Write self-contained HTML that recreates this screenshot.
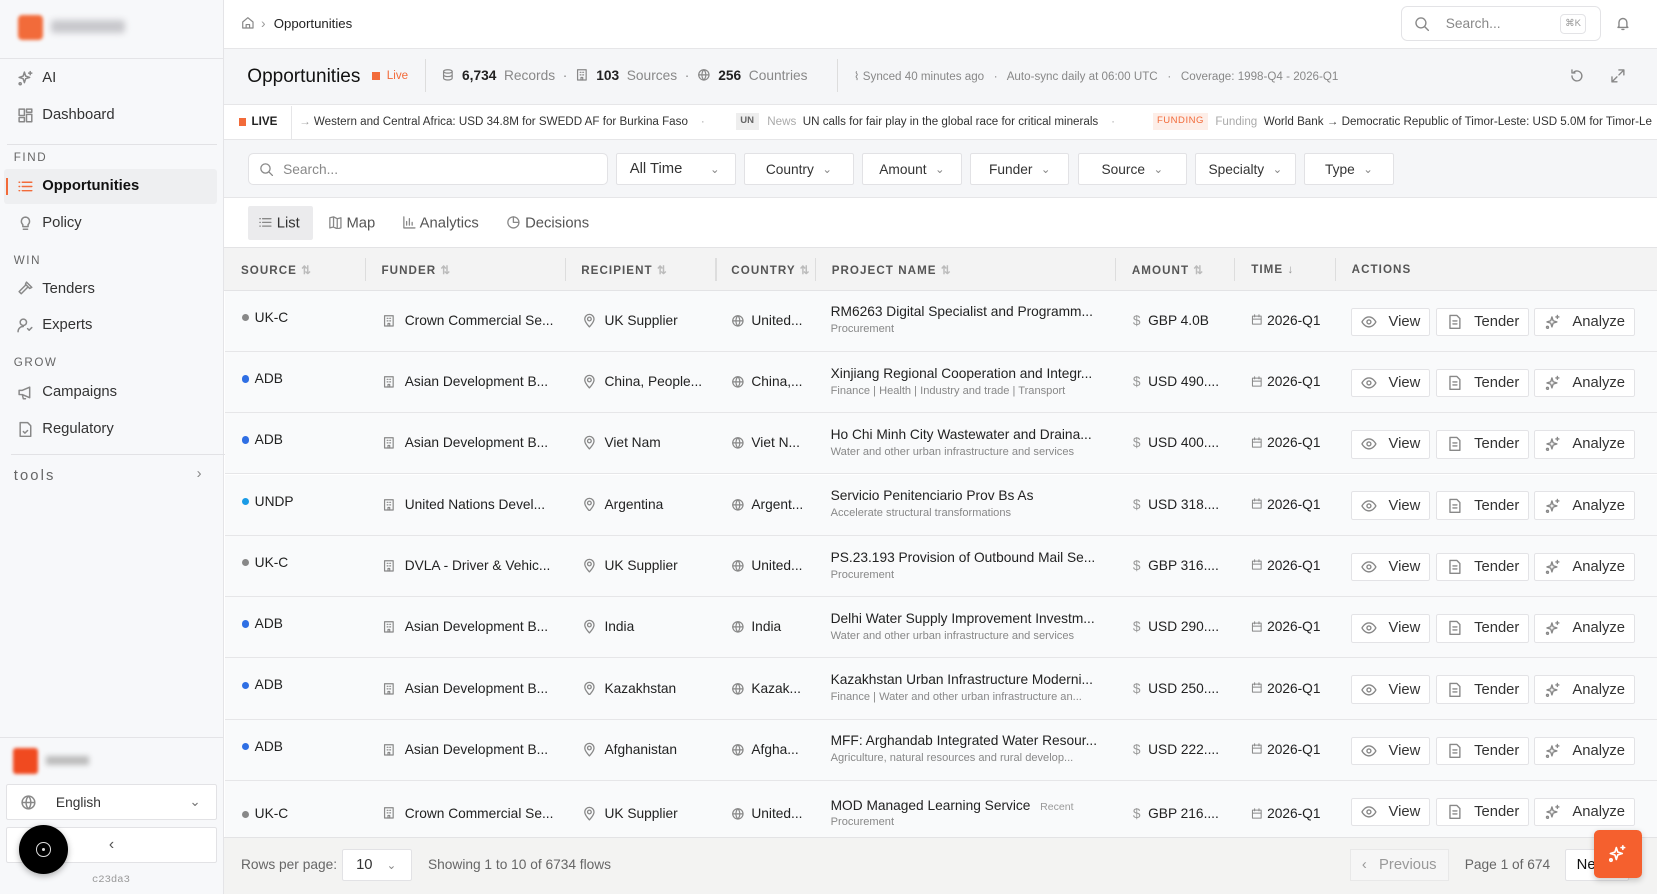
<!DOCTYPE html>
<html><head><meta charset="utf-8"><style>
*{box-sizing:border-box;margin:0;padding:0}
html,body{width:1657px;height:894px;overflow:hidden;background:#fff}
#app{zoom:1.0568;width:1568px;height:846px;position:relative;font-family:"Liberation Sans",sans-serif;color:#222;font-size:13px}
.a{position:absolute;white-space:nowrap}
svg{fill:none;stroke:#888;stroke-width:1.4;stroke-linecap:round;stroke-linejoin:round}
.side{position:absolute;left:0;top:0;width:212px;height:846px;background:#f7f8fa;border-right:1px solid #e4e4e7}
.nav{position:absolute;left:16px;font-size:14px;color:#333;display:flex;align-items:center;gap:8px}
.sec{position:absolute;left:13px;font-size:11px;letter-spacing:1.5px;color:#666}
.btn{position:absolute;background:#fff;border:1px solid #e2e2e5;border-radius:2px;display:flex;align-items:center;font-size:13px;color:#333}
.th{position:absolute;top:249px;font-size:11px;font-weight:bold;letter-spacing:1px;color:#555}
.sep{position:absolute;top:244px;width:1px;height:22px;background:#ddd}
.row{position:absolute;left:213px;width:1355px;height:58px;background:#f9fafb;border-bottom:1px solid #e6e6e8}
.row .a{font-size:13px}
.sub{font-size:10.5px!important;color:#888}
.ab{position:absolute;top:16px;height:27px;background:#fff;border:1px solid #e3e3e6;border-radius:2px;display:flex;align-items:center;font-size:14px;color:#333}
.ab span{margin-left:11px}
</style></head><body><div id="app">

<div class="side">
 <div class="a" style="left:17px;top:14px;width:24px;height:24px;background:#f26b3a;border-radius:4px;filter:blur(1.5px)"></div>
 <div class="a" style="left:48px;top:19px;width:70px;height:12px;background:#c8c8cc;border-radius:3px;filter:blur(3px)"></div>
 <div class="a" style="left:0;top:55px;width:211px;height:1px;background:#e4e4e7"></div>
 <div class="nav" style="top:66px"><svg width="16" height="16" viewBox="0 0 16 16"><path d="M7 2l1.2 3.8L12 7l-3.8 1.2L7 12l-1.2-3.8L2 7l3.8-1.2z"/><path d="M12.5 1.5v3M11 3h3"/><circle cx="3" cy="13" r="1"/></svg>AI</div>
 <div class="nav" style="top:101px"><svg width="16" height="16" viewBox="0 0 16 16"><rect x="2" y="2" width="5" height="6"/><rect x="9" y="2" width="5" height="3"/><rect x="2" y="10" width="5" height="4"/><rect x="9" y="7" width="5" height="7"/></svg>Dashboard</div>
 <div class="a" style="left:7px;top:136px;width:198px;height:1px;background:#e2e2e5"></div>
 <div class="sec" style="top:143px">FIND</div>
 <div class="a" style="left:4px;top:160px;width:201px;height:33px;background:#eeeff1;border-radius:3px"></div>
 <div class="a" style="left:6px;top:168px;width:2px;height:17px;background:#f26b3a"></div>
 <div class="nav" style="top:168px;color:#111;font-weight:bold"><svg width="16" height="16" viewBox="0 0 16 16" style="stroke:#f26b3a"><path d="M5 4h9M5 8h9M5 12h9M2 4h.5M2 8h.5M2 12h.5"/></svg>Opportunities</div>
 <div class="nav" style="top:203px"><svg width="16" height="16" viewBox="0 0 16 16"><path d="M8 2a4 4 0 0 0-2.5 7V11h5V9A4 4 0 0 0 8 2zM6 13.5h4"/></svg>Policy</div>
 <div class="sec" style="top:240px">WIN</div>
 <div class="nav" style="top:265px"><svg width="16" height="16" viewBox="0 0 16 16"><path d="M9 2l5 5-2 1-4-4zM8 5l-6 6 2 2 6-6"/></svg>Tenders</div>
 <div class="nav" style="top:300px"><svg width="16" height="16" viewBox="0 0 16 16"><circle cx="6" cy="5" r="3"/><path d="M1 14c0-3 2-5 5-5M10 11l1.5 1.5L14 10"/></svg>Experts</div>
 <div class="sec" style="top:337px">GROW</div>
 <div class="nav" style="top:363px"><svg width="16" height="16" viewBox="0 0 16 16"><path d="M2 6h3l7-3v10L5 10H2zM5 10l1 4h2"/></svg>Campaigns</div>
 <div class="nav" style="top:398px"><svg width="16" height="16" viewBox="0 0 16 16"><path d="M3 1.5h7l3 3v10H3zM6 10l1.5 1.5L10 9"/></svg>Regulatory</div>
 <div class="a" style="left:10px;top:430px;width:203px;height:1px;background:#e2e2e5"></div>
 <div class="a" style="left:13px;top:443px;font-size:14px;letter-spacing:2px;color:#666">tools</div>
 <div class="a" style="left:186px;top:441px;font-size:14px;color:#888">›</div>
 <div class="a" style="left:0;top:697px;width:211px;height:1px;background:#e4e4e7"></div>
 <div class="a" style="left:12px;top:708px;width:24px;height:24px;background:#f04a20;border-radius:3px;filter:blur(1.5px)"></div>
 <div class="a" style="left:44px;top:715px;width:40px;height:9px;background:#bbb;filter:blur(2.5px)"></div>
 <div class="btn" style="left:6px;top:742px;width:199px;height:34px;padding-left:12px"><svg width="16" height="16" viewBox="0 0 16 16"><circle cx="8" cy="8" r="6"/><path d="M2 8h12M8 2c-3 3-3 9 0 12M8 2c3 3 3 9 0 12"/></svg><span style="margin-left:18px">English</span><span style="margin-left:auto;margin-right:14px;color:#777">⌄</span></div>
 <div class="btn" style="left:6px;top:783px;width:199px;height:34px;justify-content:center;color:#555;font-size:15px">‹</div>
 <div class="a" style="left:18px;top:781px;width:46px;height:46px;border-radius:50%;background:#000;box-shadow:0 2px 6px rgba(0,0,0,.3)"><div style="position:absolute;left:16px;top:16px;width:14px;height:14px;border:1.5px solid #ddd;border-radius:50%"></div><div style="position:absolute;left:21.5px;top:21.5px;width:3px;height:3px;background:#ddd;border-radius:50%"></div></div>
 <div class="a" style="left:87px;top:827px;font-size:10px;color:#999;font-family:'Liberation Mono',monospace">c23da3</div>
</div>

<!-- header -->
<div class="a" style="left:228px;top:15px"><svg width="13" height="13" viewBox="0 0 16 16"><path d="M2 7l6-5 6 5v7H2zM6 14v-4h4v4"/></svg></div>
<div class="a" style="left:247px;top:15px;color:#999">›</div>
<div class="a" style="left:259px;top:15px;font-size:12.5px;color:#222">Opportunities</div>
<div class="a" style="left:1326px;top:6px;width:189px;height:33px;border:1px solid #e3e3e6;border-radius:6px"></div>
<div class="a" style="left:1338px;top:15px"><svg width="15" height="15" viewBox="0 0 16 16"><circle cx="7" cy="7" r="5"/><path d="M11 11l3.5 3.5"/></svg></div>
<div class="a" style="left:1368px;top:15px;font-size:13px;color:#888">Search...</div>
<div class="a" style="left:1476px;top:13px;width:25px;height:19px;border:1px solid #e3e3e6;border-radius:4px;font-size:9px;color:#999;text-align:center;line-height:17px">⌘K</div>
<div class="a" style="left:1528px;top:14px"><svg width="15" height="16" viewBox="0 0 16 16"><path d="M4 11V7a4 4 0 0 1 8 0v4l1 1H3zM7 14h2"/></svg></div>

<!-- stats bar -->
<div class="a" style="left:212px;top:45px;width:1356px;height:54px;background:#f5f6f8;border-top:1px solid #e6e6e8;border-bottom:1px solid #e6e6e8"></div>
<div class="a" style="left:234px;top:62px;font-size:18px;color:#111">Opportunities</div>
<div class="a" style="left:352px;top:68px;width:8px;height:8px;background:#f26b3a"></div>
<div class="a" style="left:366px;top:65px;font-size:11px;color:#f26b3a">Live</div>
<div class="a" style="left:402px;top:56px;width:1px;height:31px;background:#ddd"></div>
<div class="a" style="left:417px;top:64px;font-size:13px;color:#888"><svg width="13" height="13" viewBox="0 0 16 16" style="vertical-align:-2px"><ellipse cx="8" cy="4" rx="5" ry="2"/><path d="M3 4v8c0 1 2 2 5 2s5-1 5-2V4M3 8c0 1 2 2 5 2s5-1 5-2"/></svg>&nbsp; <b style="color:#222">6,734</b>&nbsp; Records &nbsp;·&nbsp; <svg width="13" height="13" viewBox="0 0 16 16" style="vertical-align:-2px"><rect x="3" y="2" width="10" height="12"/><path d="M6 5h1M9 5h1M6 8h1M9 8h1M7 14v-3h2v3"/></svg>&nbsp; <b style="color:#222">103</b>&nbsp; Sources &nbsp;·&nbsp; <svg width="13" height="13" viewBox="0 0 16 16" style="vertical-align:-2px"><circle cx="8" cy="8" r="6"/><path d="M2 8h12M8 2c-3 3-3 9 0 12M8 2c3 3 3 9 0 12"/></svg>&nbsp; <b style="color:#222">256</b>&nbsp; Countries</div>
<div class="a" style="left:792px;top:56px;width:1px;height:31px;background:#ddd"></div>
<div class="a" style="left:808px;top:65px;font-size:11px;color:#888">⌇ Synced 40 minutes ago &nbsp;&nbsp;·&nbsp;&nbsp; Auto-sync daily at 06:00 UTC &nbsp;&nbsp;·&nbsp;&nbsp; Coverage: 1998-Q4 - 2026-Q1</div>
<div class="a" style="left:1485px;top:64px"><svg width="15" height="15" viewBox="0 0 16 16"><path d="M3 8a5 5 0 1 0 2-4M3 2v3h3"/></svg></div>
<div class="a" style="left:1523px;top:64px"><svg width="15" height="15" viewBox="0 0 16 16"><path d="M9 2h5v5M14 2l-5 5M7 14H2V9M2 14l5-5"/></svg></div>

<!-- ticker -->
<div class="a" style="left:226px;top:112px;width:7px;height:7px;background:#f26b3a"></div>
<div class="a" style="left:238px;top:109px;font-size:11px;font-weight:bold;color:#222">LIVE</div>
<div class="a" style="left:275px;top:100px;width:1px;height:32px;background:#e6e6e8"></div>
<div class="a" style="left:283px;top:109px;font-size:11px;color:#333"><span style="color:#999">→</span> Western and Central Africa: USD 34.8M for SWEDD AF for Burkina Faso &nbsp;&nbsp; <span style="color:#aaa">·</span></div>
<div class="a" style="left:696px;top:107px;width:22px;height:16px;background:#eee;font-size:9px;font-weight:bold;color:#666;text-align:center;line-height:16px">UN</div>
<div class="a" style="left:726px;top:109px;font-size:11px;color:#333"><span style="color:#aaa">News</span>&nbsp; UN calls for fair play in the global race for critical minerals &nbsp;&nbsp; <span style="color:#aaa">·</span></div>
<div class="a" style="left:1091px;top:107px;width:52px;height:16px;background:#fdeee8;font-size:9px;color:#f26b3a;text-align:center;line-height:16px;letter-spacing:.5px">FUNDING</div>
<div class="a" style="left:1150px;top:109px;font-size:11px;color:#333"><span style="color:#aaa">Funding</span>&nbsp; World Bank → Democratic Republic of Timor-Leste: USD 5.0M for Timor-Le</div>

<!-- filters -->
<div class="a" style="left:212px;top:132px;width:1356px;height:55px;background:#f5f6f8;border-top:1px solid #e6e6e8;border-bottom:1px solid #e6e6e8"></div>
<div class="btn" style="left:235px;top:145px;width:340px;height:30px;border-radius:5px;padding-left:9px;color:#888"><svg width="14" height="14" viewBox="0 0 16 16"><circle cx="7" cy="7" r="5"/><path d="M11 11l3.5 3.5"/></svg><span style="margin-left:9px">Search...</span></div>
<div class="btn" style="left:583px;top:145px;width:113px;height:30px;padding-left:12px;font-size:14px">All Time<span style="margin-left:auto;margin-right:14px;color:#888;font-size:11px">⌄</span></div>
<div class="btn" style="left:704px;top:145px;width:104px;height:30px;justify-content:center">Country <span style="margin-left:8px;color:#888;font-size:11px">⌄</span></div>
<div class="btn" style="left:816px;top:145px;width:94px;height:30px;justify-content:center">Amount <span style="margin-left:8px;color:#888;font-size:11px">⌄</span></div>
<div class="btn" style="left:918px;top:145px;width:94px;height:30px;justify-content:center">Funder <span style="margin-left:8px;color:#888;font-size:11px">⌄</span></div>
<div class="btn" style="left:1020px;top:145px;width:103px;height:30px;justify-content:center">Source <span style="margin-left:8px;color:#888;font-size:11px">⌄</span></div>
<div class="btn" style="left:1131px;top:145px;width:95px;height:30px;justify-content:center">Specialty <span style="margin-left:8px;color:#888;font-size:11px">⌄</span></div>
<div class="btn" style="left:1234px;top:145px;width:85px;height:30px;justify-content:center">Type <span style="margin-left:8px;color:#888;font-size:11px">⌄</span></div>

<!-- tabs -->
<div class="a" style="left:235px;top:195px;width:61px;height:32px;background:#ebebed;border-radius:2px"></div>
<div class="a" style="left:244px;top:203px;font-size:14px;color:#333"><svg width="14" height="14" viewBox="0 0 16 16" style="vertical-align:-2px"><path d="M5 4h9M5 8h9M5 12h9M2 4h.5M2 8h.5M2 12h.5"/></svg> List</div>
<div class="a" style="left:310px;top:203px;font-size:14px;color:#555"><svg width="14" height="14" viewBox="0 0 16 16" style="vertical-align:-2px"><path d="M2 3l4-1 4 2 4-1v11l-4 1-4-2-4 1zM6 2v11M10 4v11"/></svg> Map</div>
<div class="a" style="left:380px;top:203px;font-size:14px;color:#555"><svg width="14" height="14" viewBox="0 0 16 16" style="vertical-align:-2px"><path d="M2 2v12h12M5 11V7M8 11V4M11 11V8"/></svg> Analytics</div>
<div class="a" style="left:479px;top:203px;font-size:14px;color:#555"><svg width="14" height="14" viewBox="0 0 16 16" style="vertical-align:-2px"><circle cx="8" cy="8" r="6"/><path d="M8 2v6h6"/></svg> Decisions</div>

<!-- table header -->
<div class="a" style="left:212px;top:234px;width:1356px;height:41px;background:#f3f3f3;border-top:1px solid #e3e3e5;border-bottom:1px solid #e3e3e5"></div>
<div class="th" style="left:228px">SOURCE <span style="color:#bbb">⇅</span></div>
<div class="sep" style="left:345px"></div>
<div class="th" style="left:361px">FUNDER <span style="color:#bbb">⇅</span></div>
<div class="sep" style="left:535px"></div>
<div class="th" style="left:550px">RECIPIENT <span style="color:#bbb">⇅</span></div>
<div class="sep" style="left:677px"></div>
<div class="th" style="left:692px">COUNTRY <span style="color:#bbb">⇅</span></div>
<div class="sep" style="left:771px"></div>
<div class="th" style="left:787px">PROJECT NAME <span style="color:#bbb">⇅</span></div>
<div class="sep" style="left:1055px"></div>
<div class="th" style="left:1071px">AMOUNT <span style="color:#bbb">⇅</span></div>
<div class="sep" style="left:1168px"></div>
<div class="th" style="left:1184px">TIME <span style="color:#999">↓</span></div>
<div class="sep" style="left:1263px"></div>
<div class="th" style="left:1279px">ACTIONS</div>

<!-- rows -->
<div id="rows"></div>
<script>
var d=[
["UK-C","#888","Crown Commercial Se...","UK Supplier","United...","RM6263 Digital Specialist and Programm...","Procurement","GBP 4.0B"],
["ADB","#2f6fe4","Asian Development B...","China, People...","China,...","Xinjiang Regional Cooperation and Integr...","Finance | Health | Industry and trade | Transport","USD 490...."],
["ADB","#2f6fe4","Asian Development B...","Viet Nam","Viet N...","Ho Chi Minh City Wastewater and Draina...","Water and other urban infrastructure and services","USD 400...."],
["UNDP","#1a9be6","United Nations Devel...","Argentina","Argent...","Servicio Penitenciario Prov Bs As","Accelerate structural transformations","USD 318...."],
["UK-C","#888","DVLA - Driver &amp; Vehic...","UK Supplier","United...","PS.23.193 Provision of Outbound Mail Se...","Procurement","GBP 316...."],
["ADB","#2f6fe4","Asian Development B...","India","India","Delhi Water Supply Improvement Investm...","Water and other urban infrastructure and services","USD 290...."],
["ADB","#2f6fe4","Asian Development B...","Kazakhstan","Kazak...","Kazakhstan Urban Infrastructure Moderni...","Finance | Water and other urban infrastructure an...","USD 250...."],
["ADB","#2f6fe4","Asian Development B...","Afghanistan","Afgha...","MFF: Arghandab Integrated Water Resour...","Agriculture, natural resources and rural develop...","USD 222...."],
["UK-C","#888","Crown Commercial Se...","UK Supplier","United...","MOD Managed Learning Service <span style='font-size:10px;color:#999'>&nbsp; Recent</span>","Procurement","GBP 216...."]];
var bld='<svg width="13" height="13" viewBox="0 0 16 16"><rect x="3" y="2" width="10" height="12"/><path d="M6 5h1M9 5h1M6 8h1M9 8h1M7 14v-3h2v3"/></svg>';
var pin='<svg width="14" height="14" viewBox="0 0 16 16"><path d="M8 15s5-5 5-8.5a5 5 0 0 0-10 0C3 10 8 15 8 15z"/><circle cx="8" cy="6.5" r="2"/></svg>';
var glb='<svg width="13" height="13" viewBox="0 0 16 16"><circle cx="8" cy="8" r="6"/><path d="M2 8h12M8 2c-3 3-3 9 0 12M8 2c3 3 3 9 0 12"/></svg>';
var cal='<svg width="11" height="11" viewBox="0 0 16 16"><rect x="2" y="3" width="12" height="11"/><path d="M2 7h12M5 1v3M11 1v3"/></svg>';
var eye='<svg width="15" height="15" viewBox="0 0 16 16"><path d="M1 8s2.5-5 7-5 7 5 7 5-2.5 5-7 5-7-5-7-5z"/><circle cx="8" cy="8" r="2"/></svg>';
var doc='<svg width="15" height="15" viewBox="0 0 16 16"><path d="M3 1.5h7l3 3v10H3zM6 7h4M6 10h4"/></svg>';
var spk='<svg width="15" height="15" viewBox="0 0 16 16"><path d="M7 3l1.2 3.8L12 8l-3.8 1.2L7 13l-1.2-3.8L2 8l3.8-1.2z"/><path d="M12.5 1.5v3M11 3h3"/><circle cx="2.5" cy="13.5" r="1"/></svg>';
var h='';
d.forEach(function(r,i){
 var t=275+i*58, one=(i==8);
 var ty=one?24:18;
 h+='<div class="row" style="top:'+t+'px">'+
 '<div class="a" style="left:16px;top:'+(ty+4)+'px;width:7px;height:7px;border-radius:50%;background:'+r[1]+'"></div>'+
 '<div class="a" style="left:28px;top:'+ty+'px">'+r[0]+'</div>'+
 '<div class="a" style="left:148px;top:'+(one?24:22)+'px">'+bld+'</div><div class="a" style="left:170px;top:'+(one?24:21)+'px">'+r[2]+'</div>'+
 '<div class="a" style="left:338px;top:'+(one?24:21)+'px">'+pin+'</div><div class="a" style="left:359px;top:'+(one?24:21)+'px">'+r[3]+'</div>'+
 '<div class="a" style="left:479px;top:'+(one?25:22)+'px">'+glb+'</div><div class="a" style="left:498px;top:'+(one?24:21)+'px">'+r[4]+'</div>'+
 '<div class="a" style="left:573px;top:'+(one?16:13)+'px">'+r[5]+'</div>'+
 '<div class="a sub" style="left:573px;top:'+(one?33:31)+'px">'+r[6]+'</div>'+
 '<div class="a" style="left:859px;top:'+(one?24:21)+'px"><span style="color:#999">$</span>&nbsp; '+r[7]+'</div>'+
 '<div class="a" style="left:971px;top:'+(one?25:22)+'px">'+cal+'</div><div class="a" style="left:986px;top:'+(one?24:21)+'px">2026-Q1</div>'+
 '<div class="ab" style="left:1065px;width:75px;padding-left:9px">'+eye+'<span>View</span></div>'+
 '<div class="ab" style="left:1146px;width:88px;padding-left:9px">'+doc+'<span>Tender</span></div>'+
 '<div class="ab" style="left:1239px;width:95px;padding-left:9px">'+spk+'<span>Analyze</span></div>'+
 '</div>';
});
document.getElementById('rows').innerHTML=h;
</script>

<!-- footer -->
<div class="a" style="left:212px;top:792px;width:1356px;height:54px;background:#f3f3f2;border-top:1px solid #e3e3e5"></div>
<div class="a" style="left:228px;top:811px;font-size:13px;color:#666">Rows per page:</div>
<div class="btn" style="left:324px;top:803px;width:66px;height:31px;padding-left:12px;font-size:14px">10<span style="margin-left:auto;margin-right:14px;color:#888;font-size:11px">⌄</span></div>
<div class="a" style="left:405px;top:811px;font-size:13px;color:#666">Showing 1 to 10 of 6734 flows</div>
<div class="a" style="left:1277px;top:803px;width:94px;height:31px;background:#f6f6f6;border:1px solid #e8e8e8;font-size:14px;color:#999;display:flex;align-items:center;justify-content:center">‹&nbsp;&nbsp; Previous</div>
<div class="a" style="left:1386px;top:811px;font-size:13px;color:#666">Page 1 of 674</div>
<div class="btn" style="left:1481px;top:803px;width:60px;height:31px;padding-left:10px;font-size:14px;color:#111">Ne</div>
<div class="a" style="left:1508px;top:785px;width:46px;height:46px;background:#f5602e;border-radius:5px;box-shadow:0 2px 6px rgba(0,0,0,.2);display:flex;align-items:center;justify-content:center"><svg width="18" height="18" viewBox="0 0 16 16" style="stroke:#fff"><path d="M7 3l1.2 3.8L12 8l-3.8 1.2L7 13l-1.2-3.8L2 8l3.8-1.2z"/><path d="M12.5 1.5v3M11 3h3"/><circle cx="2.5" cy="13.5" r="1"/></svg></div>

</div></body></html>
